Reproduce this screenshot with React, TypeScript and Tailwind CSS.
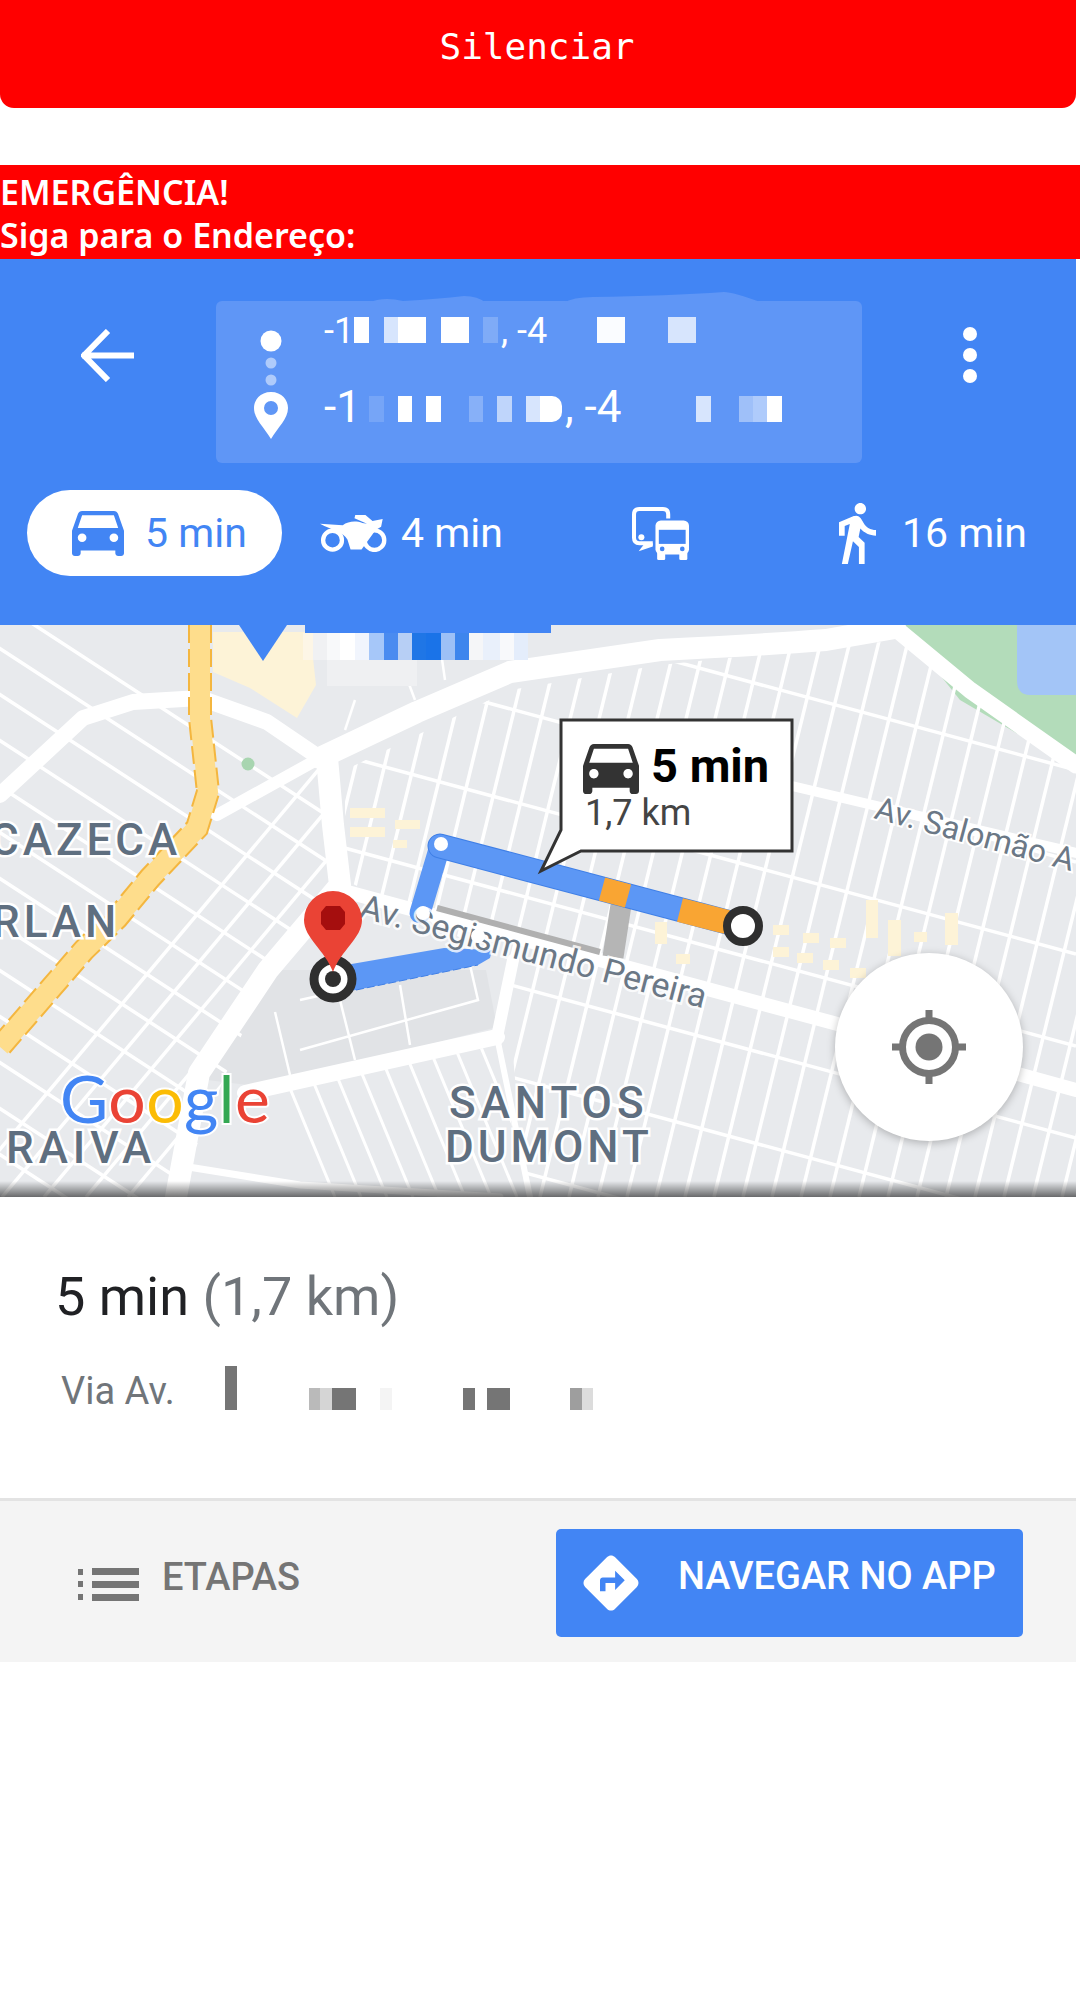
import { MdDirections } from 'react-icons/md';

type Seg = { w: number; o?: number; t?: string; round?: boolean };

const carPath =
  'M18.92 6.01C18.72 5.42 18.16 5 17.5 5h-11c-.66 0-1.21.42-1.42 1.01L3 12v8c0 .55.45 1 1 1h1c.55 0 1-.45 1-1v-1h12v1c0 .55.45 1 1 1h1c.55 0 1-.45 1-1v-8l-2.08-5.99zM6.5 16c-.83 0-1.5-.67-1.5-1.5S5.67 13 6.5 13s1.5.67 1.5 1.5S7.33 16 6.5 16zm11 0c-.83 0-1.5-.67-1.5-1.5s.67-1.5 1.5-1.5 1.5.67 1.5 1.5-.67 1.5-1.5 1.5zM5 11l1.5-4.5h11L19 11H5z';

const originSegs: Seg[] = [
  { w: 30, t: '-1' },
  { w: 15, o: 1 },
  { w: 15 },
  { w: 14, o: 0.75 },
  { w: 28, o: 1 },
  { w: 15 },
  { w: 28, o: 1 },
  { w: 14 },
  { w: 15, o: 0.2 },
  { w: 3 },
  { w: 96, t: ', -4' },
  { w: 28, o: 0.97 },
  { w: 43 },
  { w: 28, o: 0.75 },
];

const destSegs: Seg[] = [
  { w: 45, t: '-1' },
  { w: 15, o: 0.15 },
  { w: 14 },
  { w: 14, o: 1 },
  { w: 14 },
  { w: 15, o: 1 },
  { w: 28 },
  { w: 14, o: 0.25 },
  { w: 14 },
  { w: 15, o: 0.6 },
  { w: 14 },
  { w: 14, o: 0.75 },
  { w: 22, o: 1, round: true },
  { w: 3 },
  { w: 131, t: ', -4' },
  { w: 15, o: 0.75 },
  { w: 28 },
  { w: 14, o: 0.4 },
  { w: 14, o: 0.5 },
  { w: 15, o: 1 },
];

const viaSegs: { w: number; o?: number }[] = [
  { w: 72 },
  { w: 11, o: 0.5 },
  { w: 12, o: 0.3 },
  { w: 24, o: 1 },
  { w: 24 },
  { w: 12, o: 0.08 },
  { w: 71 },
  { w: 12, o: 1 },
  { w: 12 },
  { w: 23, o: 1 },
  { w: 60 },
  { w: 12, o: 0.7 },
  { w: 11, o: 0.25 },
];

// tarja do nome do destino, em cima do mapa
const labelPixels: [number, number, string][] = [
  [303, 10, '#fdf6e6'],
  [313, 14, '#f0f1f3'],
  [327, 13, '#f8f9fa'],
  [340, 15, '#ffffff'],
  [355, 14, '#f1f5fd'],
  [369, 15, '#a6c7f9'],
  [384, 14, '#4a8bf0'],
  [398, 14, '#b7cff5'],
  [412, 14, '#1f76e6'],
  [426, 15, '#1a73e8'],
  [441, 14, '#9dc0f6'],
  [455, 14, '#3d85ed'],
  [469, 14, '#f5f6f8'],
  [483, 17, '#e9f0fb'],
  [500, 14, '#f8f9fb'],
  [514, 14, '#e4edfb'],
];

const sandBars = [
  [350, 808, 35, 10],
  [395, 820, 25, 9],
  [350, 827, 35, 10],
  [393, 840, 14, 8],
  [773, 925, 16, 10],
  [803, 933, 16, 10],
  [830, 938, 16, 10],
  [773, 947, 16, 10],
  [797, 953, 16, 10],
  [823, 960, 16, 10],
  [850, 968, 16, 10],
  [866, 900, 12, 38],
  [888, 920, 13, 36],
  [945, 913, 13, 32],
  [914, 932, 13, 10],
  [655, 922, 12, 22],
  [676, 954, 14, 10],
];

function CoordRow({ segs, textClass }: { segs: Seg[]; textClass: string }) {
  return (
    <div className="flex h-[26px] items-end text-white">
      {segs.map((s, i) =>
        s.t ? (
          <span key={i} className={`whitespace-nowrap leading-none ${textClass}`} style={{ width: s.w }}>
            {s.t}
          </span>
        ) : (
          <span
            key={i}
            className={`h-full bg-white ${s.round ? 'rounded-r-[10px]' : ''}`}
            style={{ width: s.w, opacity: s.o ?? 0 }}
          />
        ),
      )}
    </div>
  );
}

function RoadsMap() {
  // quarteirões gerados, as avenidas vêm depois por cima
  const steep = Array.from({ length: 34 }, (_, i) => 300 + i * 29);
  const cross = Array.from({ length: 9 }, (_, i) => 560 + i * 92);
  const upRight = Array.from({ length: 15 }, (_, i) => -40 + i * 42);
  const downRight = Array.from({ length: 14 }, (_, i) => 570 + i * 46);
  const south = Array.from({ length: 11 }, (_, i) => 240 + i * 26);

  return (
    <svg viewBox="0 625 1076 572" className="block h-[572px] w-[1076px]">
      <defs>
        <clipPath id="leftBlock">
          <path d="M0 625H320V760L340 885L268 970L176 1197H0Z" />
        </clipPath>
        <clipPath id="rightBlock">
          <path d="M345 770L510 690L660 665L900 640L1076 775V1197H525L505 960L345 880Z" />
        </clipPath>
        <clipPath id="southBlock">
          <path d="M245 1100L497 1045L525 1197H185Z" />
        </clipPath>
      </defs>
      <rect x="0" y="625" width="1076" height="572" fill="#e8eaed" />
      <path d="M207 1080L275 970H486L497 1027L264 1087Z" fill="#e1e3e6" />
      <path d="M213 632H313V658L316 685L297 718L250 688L213 672Z" fill="#fdf3d7" />
      <path d="M900 625H1076V768L960 700Z" fill="#b3dcba" />
      <path d="M1017 625H1076V695H1030Q1017 695 1017 680Z" fill="#a3c5f7" />

      <g clipPath="url(#rightBlock)" stroke="#fff" strokeWidth="3.5" fill="none">
        {steep.map((x) => (
          <path key={x} d={`M${x + 90} 625L${x - 50} 1197`} />
        ))}
        {cross.map((y) => (
          <path key={y} d={`M300 ${y}L1076 ${y + 210}`} />
        ))}
      </g>
      <g clipPath="url(#leftBlock)" stroke="#fff" strokeWidth="3.5" fill="none">
        {upRight.map((x) => (
          <path key={x} d={`M${x + 480} 625L${x} 1197`} />
        ))}
        {downRight.map((y) => (
          <path key={y} d={`M-50 ${y}L380 ${y + 280}`} />
        ))}
      </g>
      <g clipPath="url(#southBlock)" stroke="#fff" strokeWidth="3" fill="none">
        {south.map((x) => (
          <path key={x} d={`M${x + 30} 1040L${x + 95} 1197`} />
        ))}
      </g>
      <path
        d="M275 1012L290 1075M300 1000L470 962M340 1000L355 1060M400 985L410 1045M470 965L478 1000L300 1050"
        stroke="#fff"
        strokeWidth="2.5"
        fill="none"
      />
      <path d="M355 700L345 730M400 660L415 700M440 645L445 680" stroke="#fff" strokeWidth="2.5" fill="none" />

      <g stroke="#fff" fill="none" strokeLinecap="round" strokeLinejoin="round">
        <path d="M320 758L417 712L510 672L660 650Q760 645 826 640L895 628" strokeWidth="22" />
        <path d="M895 628L970 690L1076 765" strokeWidth="17" />
        <path d="M320 758L217 815" strokeWidth="12" />
        <path d="M327 758L333 825L340 885L268 970L199 1073L176 1197" strokeWidth="22" />
        <path d="M0 795L83 718L133 702L200 698L267 722L320 758" strokeWidth="16" />
        <path d="M340 890L830 1022L1076 1090" strokeWidth="14" />
        <path d="M792 786L1076 853" strokeWidth="10" />
        <path d="M245 1093L497 1037" strokeWidth="16" />
        <path d="M497 1037L513 960" strokeWidth="12" />
        <path d="M497 1037L530 1197" strokeWidth="6" />
        <path d="M176 1165L300 1185L500 1197" strokeWidth="7" />
      </g>

      <circle cx="248" cy="764" r="6.5" fill="#a8d5b0" />
      {sandBars.map(([x, y, w, h], i) => (
        <rect key={i} x={x} y={y} width={w} height={h} fill="#fdf3d7" />
      ))}

      <path
        d="M200 625V718L208 792L197 828L150 878L117 918L84 950L0 1047"
        stroke="#f4b63f"
        strokeWidth="24"
        strokeDasharray="18 6"
        fill="none"
      />
      <path d="M200 625V718L208 792L197 828L150 878L117 918L84 950L0 1047" stroke="#fedd8c" strokeWidth="20" fill="none" />

      <path d="M239 625H287L263 661Z" fill="#4285f4" />
      <rect x="305" y="625" width="246" height="8" fill="#4285f4" />
      {labelPixels.map(([x, w, c]) => (
        <rect key={x} x={x} y="633" width={w} height="27" fill={c} />
      ))}
      <rect x="327" y="660" width="90" height="26" fill="#eff0f2" />

      <g fontFamily="Roboto, sans-serif" fontWeight="500" fill="#5f6f80" stroke="#fff" strokeWidth="5" paintOrder="stroke" fontSize="44">
        <text x="-10" y="855" letterSpacing="4">CAZECA</text>
        <text x="-8" y="937" letterSpacing="4">RLAN</text>
        <text x="6" y="1163" letterSpacing="5">RAIVA</text>
        <text x="449" y="1118" letterSpacing="5">SANTOS</text>
        <text x="445" y="1162" letterSpacing="4">DUMONT</text>
      </g>

      {/* rota */}
      <path d="M340 966L444 948L492 950L490 958L478 965L356 990L340 992Z" fill="#5c97f5" />
      <path d="M356 990L478 965" stroke="#3f7fe6" strokeWidth="1" strokeDasharray="8 3" fill="none" />
      <path d="M600 952L437 908" stroke="#b0b0b0" strokeWidth="6" fill="none" />
      <path d="M621 905L613 957" stroke="#b5b5b5" strokeWidth="21" fill="none" />
      <path d="M420 913L440 846" stroke="#5c97f5" strokeWidth="21" fill="none" strokeLinecap="round" />
      <path d="M440 846L742 926" stroke="#3f7fe6" strokeWidth="25" fill="none" strokeLinecap="round" />
      <path d="M440 846L742 926" stroke="#5c97f5" strokeWidth="23" fill="none" strokeLinecap="round" />
      <path d="M602 889L628 896" stroke="#f9a533" strokeWidth="24" fill="none" />
      <path d="M680 910L727 922" stroke="#f9a533" strokeWidth="24" fill="none" />

      <text
        x="358"
        y="917"
        transform="rotate(14.8 358 917)"
        fontFamily="Roboto, sans-serif"
        fontSize="34"
        fill="#6b7886"
        stroke="#fff"
        strokeOpacity="0.8"
        strokeWidth="5"
        paintOrder="stroke"
      >
        Av. Segismundo Pereira
      </text>
      <text
        x="873"
        y="818"
        transform="rotate(15 873 818)"
        fontFamily="Roboto, sans-serif"
        fontSize="32"
        fill="#6b7886"
        stroke="#fff"
        strokeWidth="4"
        paintOrder="stroke"
      >
        Av. Salomão A
      </text>

      <circle cx="441" cy="844" r="7" fill="#fff" />
      <circle cx="423" cy="913" r="7" fill="#fff" />
      <circle cx="478" cy="936" r="7" fill="#fff" />

      <circle cx="743" cy="926" r="16" fill="#fff" stroke="#2f2f2f" strokeWidth="8" />
      <circle cx="333" cy="979" r="19" fill="#fff" stroke="#2f2f2f" strokeWidth="9" />
      <circle cx="333" cy="979" r="8" fill="#2f2f2f" />

      <path d="M333 972C325 950 304 938 304 920A29 29 0 0 1 362 920C362 938 341 950 333 972Z" fill="#ea4335" />
      <path d="M326 906H340L345 912V924L340 930H326L321 924V912Z" fill="#a50e0e" />

      {/* balão */}
      <path
        d="M561 720H792V851H581L541 871L561 830Z"
        fill="#fff"
        stroke="#333"
        strokeWidth="3"
        strokeLinejoin="miter"
      />
      <svg x="583" y="744" width="56" height="50" viewBox="3 5 18 16" preserveAspectRatio="none">
        <path d={carPath} fill="#333" />
      </svg>
      <text x="651" y="782" fontFamily="Roboto, sans-serif" fontWeight="700" fontSize="47" fill="#000">
        5 min
      </text>
      <text x="585" y="825" fontFamily="Roboto, sans-serif" fontSize="36" fill="#444">
        1,7 km
      </text>

      <text x="60" y="1123" fontFamily="Lato, sans-serif" fontSize="66" letterSpacing="0.5" stroke="#fff" strokeWidth="4" paintOrder="stroke">
        <tspan fill="#4285f4">G</tspan>
        <tspan fill="#ea4335">o</tspan>
        <tspan fill="#fbbc05">o</tspan>
        <tspan fill="#4285f4">g</tspan>
        <tspan fill="#34a853">l</tspan>
        <tspan fill="#ea4335">e</tspan>
      </text>
    </svg>
  );
}

export default function App() {
  return (
    <div className="min-h-[2005px] w-[1080px] bg-white font-['Roboto',sans-serif]">
      <button
        type="button"
        className="flex h-[108px] w-[1076px] items-center justify-center rounded-b-[14px] bg-[#ff0000] pb-[14px] pr-[2px] font-['DejaVu_Sans_Mono',monospace] text-[36px] text-white"
      >
        Silenciar
      </button>

      <div className="mt-[57px] h-[94px] bg-[#ff0000] pt-[6px] font-['Noto_Sans',sans-serif] text-[34px] font-semibold leading-[43px] text-white">
        <div>EMERGÊNCIA!</div>
        <div>Siga para o Endereço:</div>
      </div>

      <div className="h-[366px] w-[1076px] bg-[#4285f4] pt-[42px]">
        <div className="flex items-start">
          <svg viewBox="0 0 53 53" className="ml-[81px] mt-[28px] h-[53px] w-[53px]" fill="none" stroke="#fff" strokeWidth="6">
            <path d="M1 26.5H53M27 2L3 26.5L27 51" />
          </svg>

          <div className="relative ml-[82px] flex h-[162px] w-[646px] rounded-[6px] bg-[#5f96f6]">
            <svg viewBox="0 0 400 12" className="absolute bottom-full left-[152px] -mb-[2px] h-[12px] w-[400px]">
              <path
                d="M0 12Q15 5 35 10Q70 8 96 5Q110 5 118 12H195Q205 6 225 6Q300 5 356 1Q365 1 395 12Z"
                fill="#5f96f6"
              />
            </svg>
            <svg viewBox="0 0 108 162" className="h-[162px] w-[108px] shrink-0" fill="#fff">
              <circle cx="55" cy="40" r="10.5" />
              <circle cx="55" cy="62" r="5.5" opacity="0.5" />
              <circle cx="55" cy="79" r="5.5" opacity="0.5" />
              <path
                fillRule="evenodd"
                d="M55 91C44 91 38 99 38 107C38 118 48 126 55 138C62 126 72 118 72 107C72 99 66 91 55 91ZM55 100A7 7 0 1 1 55 114A7 7 0 0 1 55 100Z"
              />
            </svg>
            <div className="pt-[16px]">
              <CoordRow segs={originSegs} textClass="text-[36px] -mb-[6px]" />
              <div className="mt-[53px]">
                <CoordRow segs={destSegs} textClass="text-[44px] -mb-[7px]" />
              </div>
            </div>
          </div>

          <div className="ml-[101px] mt-[26px] flex flex-col gap-[7px]">
            <span className="h-[14px] w-[14px] rounded-full bg-white" />
            <span className="h-[14px] w-[14px] rounded-full bg-white" />
            <span className="h-[14px] w-[14px] rounded-full bg-white" />
          </div>
        </div>

        <div className="ml-[27px] mt-[27px] flex items-center text-[41px] text-white">
          <div className="flex h-[86px] w-[255px] items-center rounded-full bg-white pl-[45px] text-[#4285f4]">
            <svg viewBox="3 5 18 16" preserveAspectRatio="none" className="h-[45px] w-[52px]" fill="#4285f4">
              <path d={carPath} />
            </svg>
            <span className="ml-[21px] pt-[2px]">5 min</span>
          </div>

          <svg viewBox="0 0 171 94" className="ml-[38px] h-[37px] w-[67px]" fill="#fff">
            <path d="M0 22L58 26C72 15 92 14 108 20L120 22L88 8L90 0L116 0L134 15L160 10L156 30L142 38L106 88H78L70 62C58 42 30 38 0 22Z" />
            <circle cx="32" cy="64" r="24" fill="none" stroke="#fff" strokeWidth="11" />
            <circle cx="139" cy="64" r="25" fill="none" stroke="#fff" strokeWidth="11" />
          </svg>
          <span className="ml-[14px] w-[98px] whitespace-nowrap pt-[2px]">4 min</span>

          <svg viewBox="0 0 170 158" className="ml-[133px] h-[53px] w-[57px]">
            <path d="M108 34V22Q108 6 92 6H22Q6 6 6 22V92Q6 108 22 108H62" fill="none" stroke="#fff" strokeWidth="12" />
            <circle cx="28" cy="90" r="9" fill="#fff" />
            <path d="M20 132L38 108H62V118Z" fill="#fff" />
            <rect x="70" y="40" width="100" height="102" rx="16" fill="#fff" />
            <rect x="80" y="68" width="80" height="42" fill="#4285f4" />
            <circle cx="90" cy="125" r="7" fill="#4285f4" />
            <circle cx="150" cy="125" r="7" fill="#4285f4" />
            <rect x="75" y="135" width="24" height="23" rx="4" fill="#fff" />
            <rect x="141" y="135" width="24" height="23" rx="4" fill="#fff" />
          </svg>

          <svg viewBox="6 1.5 13 21.5" preserveAspectRatio="none" className="ml-[150px] h-[61px] w-[37px]" fill="#fff">
            <path d="M13.5 5.5c1.1 0 2-.9 2-2s-.9-2-2-2-2 .9-2 2 .9 2 2 2zM9.8 8.9L7 23h2.1l1.8-8 2.1 2v6h2v-7.5l-2.1-2 .6-3C14.8 12 16.8 13 19 13v-2c-1.9 0-3.5-1-4.3-2.4l-1-1.6c-.4-.6-1-1-1.7-1-.3 0-.5.1-.8.1L6 8.3V13h2V9.6l1.8-.7" />
          </svg>
          <span className="ml-[26px] whitespace-nowrap pt-[2px]">16 min</span>
        </div>
      </div>

      <div className="relative h-[572px] w-[1076px]">
        <RoadsMap />
        <div className="absolute bottom-0 left-0 h-[16px] w-full bg-gradient-to-b from-transparent to-black/55" />
        <div className="absolute left-[835px] top-[328px] flex h-[188px] w-[188px] items-center justify-center rounded-full bg-white shadow-[0_2px_8px_rgba(0,0,0,0.25)]">
          <svg viewBox="0 0 74 74" className="h-[74px] w-[74px]" fill="none" stroke="#757575">
            <circle cx="37" cy="37" r="26.5" strokeWidth="7" />
            <circle cx="37" cy="37" r="13.5" fill="#757575" stroke="none" />
            <path d="M37 0V10M37 64V74M0 37H10M64 37H74" strokeWidth="7" />
          </svg>
        </div>
      </div>

      <div className="h-[301px] w-[1076px] pl-[55px] pt-[69px]">
        <div className="text-[54px] leading-[62px] text-[#202124]">
          5 min <span className="text-[#70757a]">(1,7 km)</span>
        </div>
        <div className="ml-[6px] mt-[38px] flex h-[44px] items-end text-[38px] leading-none text-[#70757a]">
          <span className="w-[164px] whitespace-nowrap">Via Av.</span>
          <span className="h-[44px] w-[12px] bg-[#757575]" />
          {viaSegs.map((s, i) => (
            <span key={i} className="h-[22px] bg-[#757575]" style={{ width: s.w, opacity: s.o ?? 0 }} />
          ))}
        </div>
      </div>

      <div className="flex h-[164px] w-[1076px] border-t-[3px] border-[#e3e3e3] bg-[#f4f4f4]">
        <svg viewBox="0 0 61 36" className="ml-[78px] mt-[65px] h-[36px] w-[61px]" fill="#757575">
          <rect x="0" y="3" width="5" height="6" />
          <rect x="0" y="15" width="5" height="6" />
          <rect x="0" y="28" width="5" height="6" />
          <rect x="14" y="2" width="47" height="7" />
          <rect x="14" y="15" width="47" height="7" />
          <rect x="14" y="28" width="47" height="7" />
        </svg>
        <span className="ml-[23px] mt-[55px] text-[38px] font-medium leading-[42px] text-[#757575]">ETAPAS</span>
        <div className="ml-[256px] mt-[28px] flex h-[108px] w-[467px] items-start rounded-[5px] bg-[#4285f4] text-white">
          <MdDirections className="ml-[22px] mt-[21px] h-[66px] w-[66px]" />
          <span className="ml-[34px] mt-[26px] whitespace-nowrap text-[38px] font-medium leading-[42px]">NAVEGAR NO APP</span>
        </div>
      </div>
    </div>
  );
}
